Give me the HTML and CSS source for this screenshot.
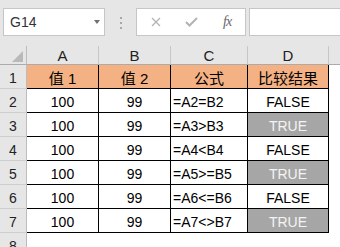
FILE: index.html
```html
<!DOCTYPE html>
<html>
<head>
<meta charset="utf-8">
<link rel="stylesheet" href="styles.css">
</head>
<body>
<div class="toolbar">
  <div class="namebox"><span class="nb-text">G14</span><span class="nb-arrow"></span></div>
  <div class="grip"><i></i><i></i><i></i></div>
  <div class="fbtns">
    <svg class="ic-x" width="10" height="10" viewBox="0 0 10 10"><path d="M1 1L9 9M9 1L1 9" stroke="#b3b3b3" stroke-width="1.3" fill="none"/></svg>
    <svg class="ic-ok" width="13" height="10" viewBox="0 0 13 10"><path d="M1 5L4.5 8.5L12 1" stroke="#b3b3b3" stroke-width="2" fill="none"/></svg>
    <span class="fx">fx</span>
  </div>
  <div class="finput"></div>
</div>
<div class="sheet">
  <div class="corner"><svg width="11" height="11" viewBox="0 0 11 11"><polygon points="11,0 11,11 0,11" fill="#b9b9b9"/></svg></div>
  <div class="ch">A</div><div class="ch">B</div><div class="ch">C</div><div class="ch">D</div><div class="ch ch-rest"></div>

  <div class="rh">1</div>
  <div class="c hd">值 1</div><div class="c hd">值 2</div><div class="c hd">公式</div><div class="c hd">比较结果</div><div class="rest"></div>

  <div class="rh">2</div>
  <div class="c">100</div><div class="c">99</div><div class="c f">=A2=B2</div><div class="c">FALSE</div><div class="rest"></div>

  <div class="rh">3</div>
  <div class="c">100</div><div class="c">99</div><div class="c f">=A3&gt;B3</div><div class="c t">TRUE</div><div class="rest"></div>

  <div class="rh">4</div>
  <div class="c">100</div><div class="c">99</div><div class="c f">=A4&lt;B4</div><div class="c">FALSE</div><div class="rest"></div>

  <div class="rh">5</div>
  <div class="c">100</div><div class="c">99</div><div class="c f">=A5&gt;=B5</div><div class="c t">TRUE</div><div class="rest"></div>

  <div class="rh">6</div>
  <div class="c">100</div><div class="c">99</div><div class="c f">=A6&lt;=B6</div><div class="c">FALSE</div><div class="rest"></div>

  <div class="rh">7</div>
  <div class="c">100</div><div class="c">99</div><div class="c f">=A7&lt;&gt;B7</div><div class="c t">TRUE</div><div class="rest"></div>

  <div class="rh">8</div>
  <div class="e"></div><div class="e"></div><div class="e"></div><div class="e"></div><div class="rest"></div>
</div>
</body>
</html>
```
FILE: styles.css
```css
* { box-sizing: border-box; }
html, body { margin: 0; padding: 0; }
body {
  width: 340px;
  height: 247px;
  overflow: hidden;
  background: #e6e6e6;
  font-family: "Liberation Sans", "Noto Sans CJK SC", sans-serif;
  color: #000;
}
.toolbar {
  height: 46px;
  display: flex;
  align-items: flex-start;
  padding: 8px 0 0 3px;
}
.namebox {
  width: 102px;
  height: 28px;
  background: #fff;
  border: 1px solid #c6c6c6;
  display: flex;
  align-items: center;
  justify-content: space-between;
  padding: 0 4px 0 6px;
}
.nb-text { font-size: 14px; color: #333; }
.nb-arrow {
  width: 0; height: 0;
  border-left: 3.5px solid transparent;
  border-right: 3.5px solid transparent;
  border-top: 4px solid #707070;
}
.grip {
  width: 2px;
  margin: 9px 14px 0 15px;
  display: flex;
  flex-direction: column;
  gap: 3px;
}
.grip i { display: block; width: 2px; height: 2px; background: #a8a8a8; }
.fbtns {
  width: 110px;
  height: 28px;
  background: #fff;
  border: 1px solid #c6c6c6;
  display: flex;
  align-items: center;
  padding-left: 14px;
}
.ic-x { margin-right: 24px; }
.ic-ok { margin-right: 25px; }
.fx {
  font-family: "Liberation Serif", serif;
  font-style: italic;
  font-size: 14px;
  color: #666;
  letter-spacing: -1px;
}
.finput {
  flex: 1;
  height: 28px;
  margin-left: 3px;
  background: #fff;
  border: 1px solid #c6c6c6;
  border-right: none;
}
.sheet {
  display: grid;
  grid-template-columns: 27px 72px 72px 77px 81px 1fr;
  grid-template-rows: 19px repeat(8, 24px);
  background: #fff;
}
.corner {
  background: #e6e6e6;
  border-right: 1px solid #bdbdbd;
  border-bottom: 1px solid #ababab;
  display: flex;
  align-items: flex-end;
  justify-content: flex-end;
  padding: 0 3px 2px 0;
}
.corner svg { display: block; }
.ch {
  background: #e6e6e6;
  border-right: 1px solid #c6c6c6;
  border-bottom: 1px solid #ababab;
  font-size: 15px;
  color: #222;
  display: flex;
  align-items: center;
  justify-content: center;
}
.ch-rest { border-right: none; }
.rh {
  background: #e6e6e6;
  border-right: 1px solid #bdbdbd;
  border-bottom: 1px solid #cfcfcf;
  font-size: 14px;
  color: #222;
  display: flex;
  align-items: center;
  justify-content: center;
  padding-top: 3px;
}
.c {
  border-right: 1px solid #000;
  border-bottom: 1px solid #000;
  font-size: 14px;
  display: flex;
  align-items: center;
  justify-content: center;
  padding-top: 3px;
  white-space: nowrap;
}
.hd { background: #f4b183; font-size: 15px; padding-top: 2px; }
.f { justify-content: flex-start; padding-left: 2px; }
.t { background: #a6a6a6; color: #f4f4f4; }
.rest, .e { background: #fff; }
```
